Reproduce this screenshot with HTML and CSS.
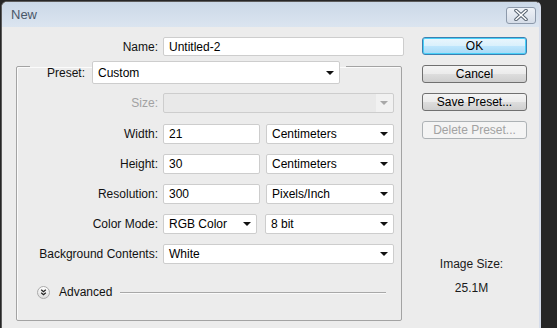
FILE: index.html
```html
<!DOCTYPE html>
<html lang="en">
<head>
  <title>New</title>
  <meta charset="UTF-8" />
  <link rel="stylesheet" href="styles.css">
</head>
<body>
  <div class="screen">
    <div class="window">
      <div class="titlebar">
        <span class="title">New</span>
        <button class="close-btn">
          <svg width="16" height="12" viewBox="0 0 16 12">
            <path d="M3 1.5 L13 10.5 M13 1.5 L3 10.5" stroke="#56626f" stroke-width="3.6" stroke-linecap="round" fill="none"/>
            <path d="M3 1.5 L13 10.5 M13 1.5 L3 10.5" stroke="#ffffff" stroke-width="1.6" stroke-linecap="round" fill="none"/>
          </svg>
        </button>
      </div>

      <div class="dialog">
        <div class="main">
          <div class="name-row">
            <span class="label">Name:</span>
            <input class="field name-field" value="Untitled-2">
          </div>

          <fieldset class="group">
            <legend class="preset">
              <span class="label preset-label">Preset:</span>
              <div class="select preset-select">Custom</div>
            </legend>

            <div class="rows">
              <div class="row size-row">
                <span class="label disabled">Size:</span>
                <div class="select full disabled"></div>
              </div>
              <div class="row">
                <span class="label">Width:</span>
                <input class="field num" value="21">
                <div class="select unit">Centimeters</div>
              </div>
              <div class="row">
                <span class="label">Height:</span>
                <input class="field num" value="30">
                <div class="select unit">Centimeters</div>
              </div>
              <div class="row">
                <span class="label">Resolution:</span>
                <input class="field num" value="300">
                <div class="select unit">Pixels/Inch</div>
              </div>
              <div class="row">
                <span class="label">Color Mode:</span>
                <div class="select mode">RGB Color</div>
                <div class="select bits">8 bit</div>
              </div>
              <div class="row">
                <span class="label">Background Contents:</span>
                <div class="select full">White</div>
              </div>
            </div>

            <div class="advanced">
              <svg class="adv-icon" width="13" height="13" viewBox="0 0 13 13">
                <defs>
                  <linearGradient id="advbg" x1="0" y1="0" x2="0" y2="1">
                    <stop offset="0" stop-color="#ffffff"/>
                    <stop offset="1" stop-color="#dcdcdc"/>
                  </linearGradient>
                </defs>
                <circle cx="6.5" cy="6.5" r="6" fill="url(#advbg)" stroke="#a9a9a9"/>
                <path d="M4.2 3.8 L6.5 5.8 L8.8 3.8 M4.2 6.8 L6.5 8.8 L8.8 6.8" stroke="#222" stroke-width="1.2" fill="none"/>
              </svg>
              <span class="adv-text">Advanced</span>
              <span class="adv-line"></span>
            </div>
          </fieldset>
        </div>

        <div class="side">
          <button class="btn btn-default">OK</button>
          <button class="btn">Cancel</button>
          <button class="btn">Save Preset...</button>
          <button class="btn" disabled>Delete Preset...</button>

          <div class="image-size">
            <div>Image Size:</div>
            <div class="size-value">25.1M</div>
          </div>
        </div>
      </div>
    </div>
  </div>
</body>
</html>
```

FILE: styles.css
```css
:root {
  --face: #ececec;
  --field-border: #cdcdcd;
  --group-line: #a3a3a3;
  --text: #111;
  --muted: #a2a2a2;
}

body {
  margin: 0;
  background: #262626;
  font-family: 'Liberation Sans', Arial, sans-serif;
  font-size: 12px;
  color: var(--text);
}

.screen {
  width: 557px;
  height: 328px;
  overflow: hidden;
  display: flex;
  background: #262626;
}

.window {
  margin: 1px 0 0 1px;
  width: 537px;
  height: 340px;
  border: 1px solid #5b5b5b;
  border-right: 2px solid #d5dcea;
  border-radius: 6px 6px 0 0;
  background: var(--face);
  overflow: hidden;
}

/* title bar */
.titlebar {
  height: 25px;
  display: flex;
  align-items: center;
  justify-content: space-between;
  padding: 0 3px 0 9px;
  background: linear-gradient(#cbd8e7, #dbe5f0);
}

.title {
  color: #4a5868;
  font-size: 13px;
}

.close-btn {
  width: 30px;
  height: 17px;
  margin-top: 1px;
  padding: 0;
  display: flex;
  align-items: center;
  justify-content: center;
  border: 1px solid #8d9aab;
  border-radius: 3px;
  background: linear-gradient(#eef2f7, #d5dde8);
}

/* dialog body */
.dialog {
  display: flex;
  padding-top: 10px;
}

.main {
  padding-left: 14px;
  width: 390px;
}

.label {
  text-align: right;
  white-space: nowrap;
}

.label.disabled {
  color: var(--muted);
}

.name-row {
  display: flex;
  align-items: center;
}

.name-row .label {
  width: 142px;
  margin-right: 5px;
}

.field {
  box-sizing: border-box;
  height: 19px;
  margin: 0;
  padding: 0 5px;
  border: 1px solid var(--field-border);
  border-radius: 2px;
  background: #fff;
  font: inherit;
  color: #000;
  outline: none;
}

.name-field {
  width: 241px;
}

.select {
  box-sizing: border-box;
  height: 20px;
  padding: 0 5px;
  display: flex;
  align-items: center;
  position: relative;
  border: 1px solid var(--field-border);
  border-radius: 2px;
  background: #fff;
  color: #000;
}

.select::after {
  content: "";
  position: absolute;
  right: 5px;
  top: 50%;
  margin-top: -2px;
  border-left: 4px solid transparent;
  border-right: 4px solid transparent;
  border-top: 4px solid #111;
}

.select.disabled {
  background: linear-gradient(to right, #e9e9e9 0, #e9e9e9 212px, #f1f1f1 212px);
}

.select.disabled::after {
  border-top-color: #a8a8a8;
}

/* group box */
.group {
  margin: -8px 0 0 0;
  padding: 9px 0 20px 0;
  width: 384px;
  min-width: 0;
  border: 1px solid var(--group-line);
  border-radius: 2px;
  box-shadow: inset 1px 1px #fbfbfb;
}

.preset {
  margin-left: 13px;
  padding: 13px 6px 0 17px;
  display: flex;
  align-items: center;
}

.preset-label {
  width: 40px;
  margin-right: 5px;
  text-align: left;
}

.preset-select {
  width: 248px;
  height: 23px;
}

.rows {
  display: flex;
  flex-direction: column;
  gap: 10px;
}

.row {
  display: flex;
  align-items: center;
}

.row .label {
  width: 141px;
  margin-right: 5px;
}

.size-row {
  margin-bottom: 1px;
}

.full { width: 231px; }
.num { width: 97px; height: 20px; }
.unit { width: 128px; margin-left: 6px; }
.mode { width: 94px; }
.bits { width: 129px; margin-left: 8px; }

.advanced {
  display: flex;
  align-items: center;
  margin: 20px 15px 0 20px;
  height: 16px;
}

.adv-text {
  margin-left: 9px;
}

.adv-line {
  flex: 1;
  margin-left: 8px;
  height: 1px;
  background: #a8a8a8;
  box-shadow: 0 1px #fafafa;
}

/* buttons column */
.side {
  width: 105px;
  margin-left: 16px;
  display: flex;
  flex-direction: column;
  gap: 10px;
}

.btn {
  height: 18px;
  padding: 0;
  border: 1px solid #707070;
  border-radius: 3px;
  background: linear-gradient(#f4f4f4 0, #ebebeb 50%, #dddddd 51%, #cfcfcf 100%);
  font: inherit;
  color: #000;
}

.btn-default {
  border-color: #3c7fb1;
  background: linear-gradient(#eaf6fd 0, #d9f0fc 50%, #bee6fd 51%, #a7d9f5 100%);
  box-shadow: inset 0 0 0 1px #48d0f8;
}

.btn:disabled {
  border-color: #adb2b5;
  background: #f4f4f4;
  color: var(--muted);
}

.image-size {
  margin-top: 108px;
  padding-right: 6px;
  text-align: center;
  line-height: 15px;
  color: #1a1a1a;
}

.size-value {
  margin-top: 9px;
}
```
